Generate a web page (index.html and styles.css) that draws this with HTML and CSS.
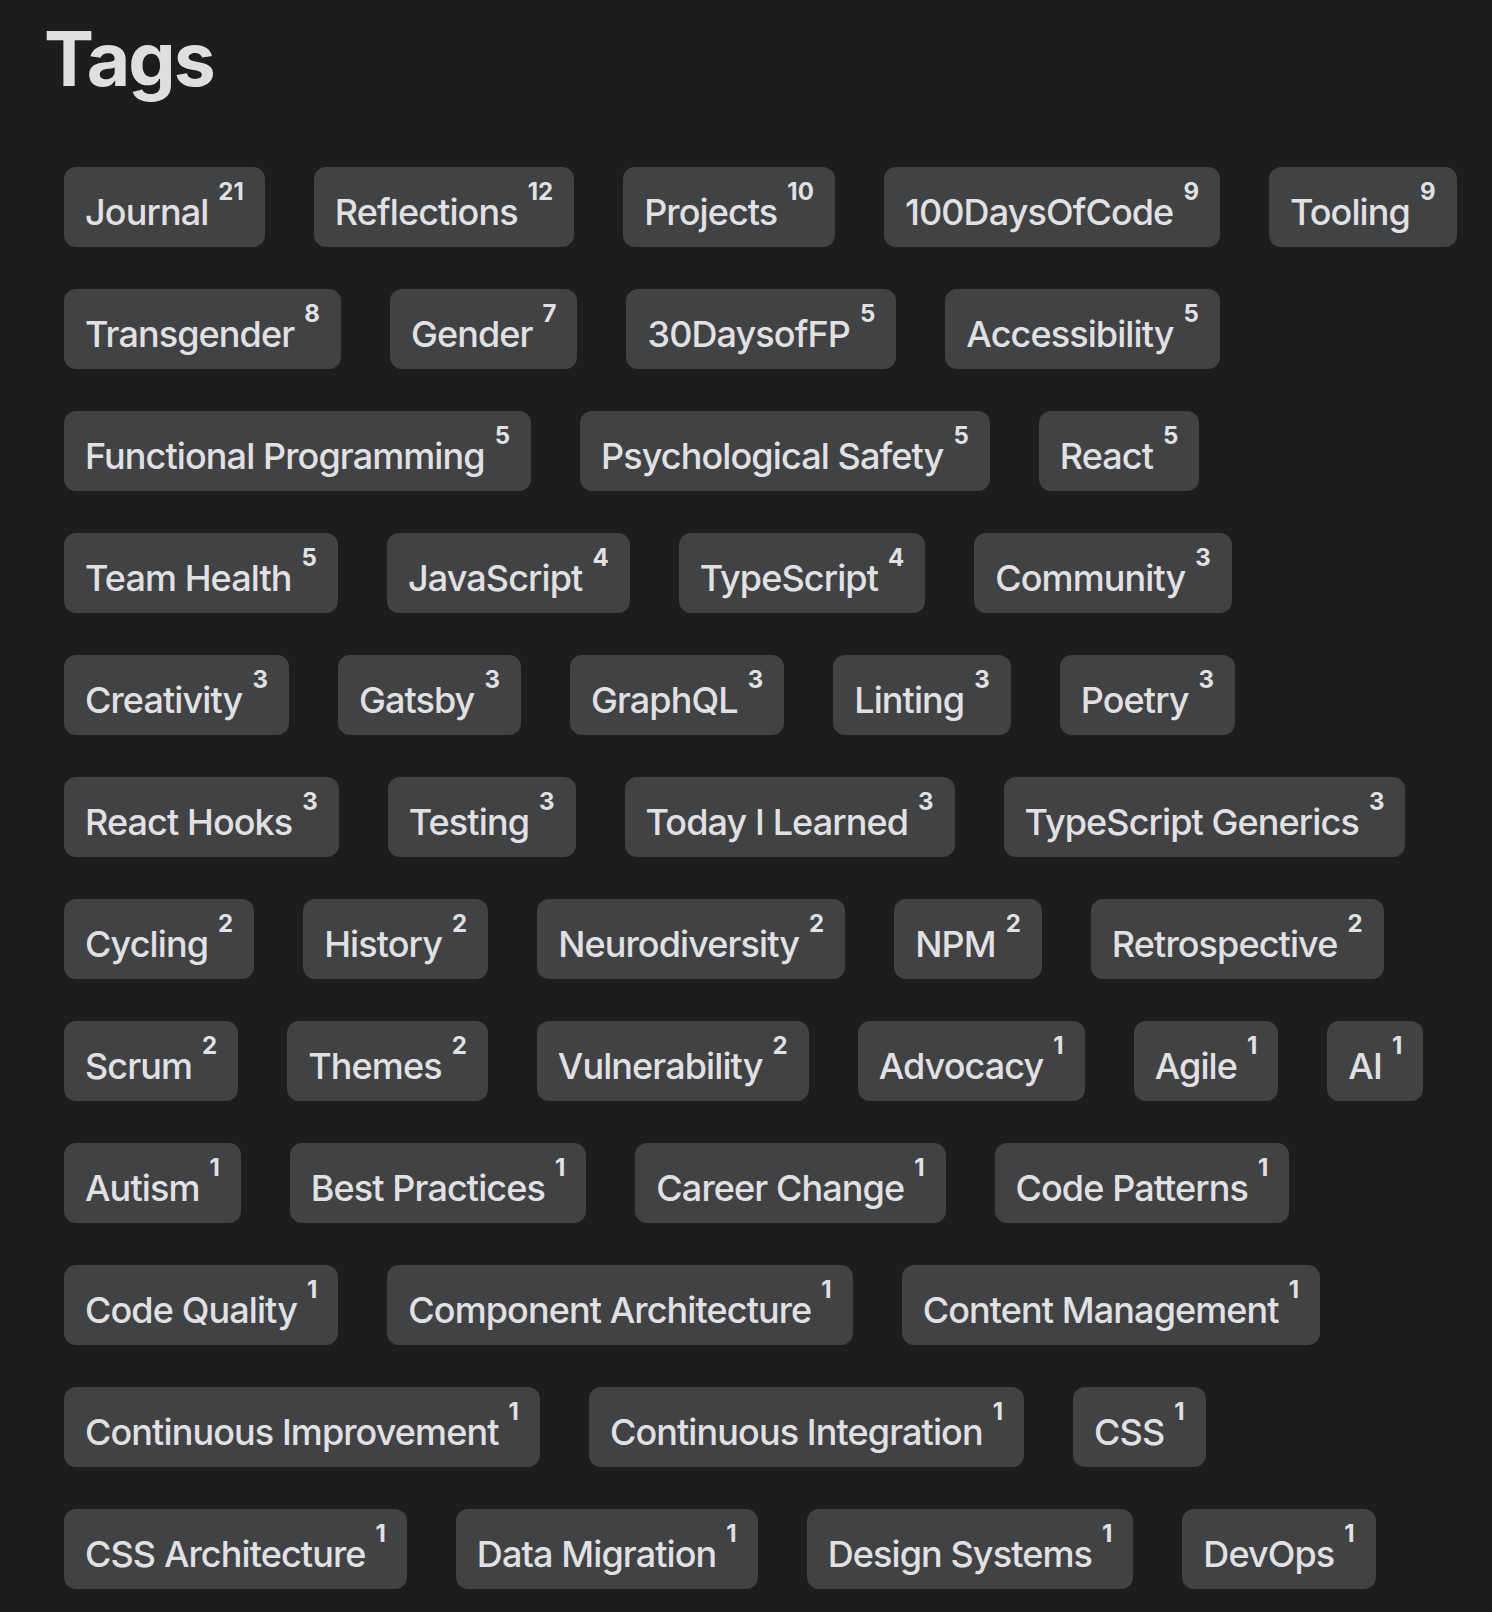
FILE: index.html
```html
<!DOCTYPE html>
<html lang="en">
<head>
<meta charset="utf-8">
<title>Tags</title>
<link rel="stylesheet" href="styles.css">
</head>
<body>
<main class="page">
  <h1 class="page-title">Tags</h1>
  <ul class="tag-list">
    <li class="tag"><span class="tag-name">Journal</span><span class="tag-count">21</span></li>
    <li class="tag"><span class="tag-name">Reflections</span><span class="tag-count">12</span></li>
    <li class="tag"><span class="tag-name">Projects</span><span class="tag-count">10</span></li>
    <li class="tag"><span class="tag-name">100DaysOfCode</span><span class="tag-count">9</span></li>
    <li class="tag"><span class="tag-name">Tooling</span><span class="tag-count">9</span></li>
    <li class="tag"><span class="tag-name">Transgender</span><span class="tag-count">8</span></li>
    <li class="tag"><span class="tag-name">Gender</span><span class="tag-count">7</span></li>
    <li class="tag"><span class="tag-name">30DaysofFP</span><span class="tag-count">5</span></li>
    <li class="tag"><span class="tag-name">Accessibility</span><span class="tag-count">5</span></li>
    <li class="tag"><span class="tag-name">Functional Programming</span><span class="tag-count">5</span></li>
    <li class="tag"><span class="tag-name">Psychological Safety</span><span class="tag-count">5</span></li>
    <li class="tag"><span class="tag-name">React</span><span class="tag-count">5</span></li>
    <li class="tag"><span class="tag-name">Team Health</span><span class="tag-count">5</span></li>
    <li class="tag"><span class="tag-name">JavaScript</span><span class="tag-count">4</span></li>
    <li class="tag"><span class="tag-name">TypeScript</span><span class="tag-count">4</span></li>
    <li class="tag"><span class="tag-name">Community</span><span class="tag-count">3</span></li>
    <li class="tag"><span class="tag-name">Creativity</span><span class="tag-count">3</span></li>
    <li class="tag"><span class="tag-name">Gatsby</span><span class="tag-count">3</span></li>
    <li class="tag"><span class="tag-name">GraphQL</span><span class="tag-count">3</span></li>
    <li class="tag"><span class="tag-name">Linting</span><span class="tag-count">3</span></li>
    <li class="tag"><span class="tag-name">Poetry</span><span class="tag-count">3</span></li>
    <li class="tag"><span class="tag-name">React Hooks</span><span class="tag-count">3</span></li>
    <li class="tag"><span class="tag-name">Testing</span><span class="tag-count">3</span></li>
    <li class="tag"><span class="tag-name">Today I Learned</span><span class="tag-count">3</span></li>
    <li class="tag"><span class="tag-name">TypeScript Generics</span><span class="tag-count">3</span></li>
    <li class="tag"><span class="tag-name">Cycling</span><span class="tag-count">2</span></li>
    <li class="tag"><span class="tag-name">History</span><span class="tag-count">2</span></li>
    <li class="tag"><span class="tag-name">Neurodiversity</span><span class="tag-count">2</span></li>
    <li class="tag"><span class="tag-name">NPM</span><span class="tag-count">2</span></li>
    <li class="tag"><span class="tag-name">Retrospective</span><span class="tag-count">2</span></li>
    <li class="tag"><span class="tag-name">Scrum</span><span class="tag-count">2</span></li>
    <li class="tag"><span class="tag-name">Themes</span><span class="tag-count">2</span></li>
    <li class="tag"><span class="tag-name">Vulnerability</span><span class="tag-count">2</span></li>
    <li class="tag"><span class="tag-name">Advocacy</span><span class="tag-count">1</span></li>
    <li class="tag"><span class="tag-name">Agile</span><span class="tag-count">1</span></li>
    <li class="tag"><span class="tag-name">AI</span><span class="tag-count">1</span></li>
    <li class="tag"><span class="tag-name">Autism</span><span class="tag-count">1</span></li>
    <li class="tag"><span class="tag-name">Best Practices</span><span class="tag-count">1</span></li>
    <li class="tag"><span class="tag-name">Career Change</span><span class="tag-count">1</span></li>
    <li class="tag"><span class="tag-name">Code Patterns</span><span class="tag-count">1</span></li>
    <li class="tag"><span class="tag-name">Code Quality</span><span class="tag-count">1</span></li>
    <li class="tag"><span class="tag-name">Component Architecture</span><span class="tag-count">1</span></li>
    <li class="tag"><span class="tag-name">Content Management</span><span class="tag-count">1</span></li>
    <li class="tag"><span class="tag-name">Continuous Improvement</span><span class="tag-count">1</span></li>
    <li class="tag"><span class="tag-name">Continuous Integration</span><span class="tag-count">1</span></li>
    <li class="tag"><span class="tag-name">CSS</span><span class="tag-count">1</span></li>
    <li class="tag"><span class="tag-name">CSS Architecture</span><span class="tag-count">1</span></li>
    <li class="tag"><span class="tag-name">Data Migration</span><span class="tag-count">1</span></li>
    <li class="tag"><span class="tag-name">Design Systems</span><span class="tag-count">1</span></li>
    <li class="tag"><span class="tag-name">DevOps</span><span class="tag-count">1</span></li>
  </ul>
</main>
</body>
</html>
```

FILE: styles.css
```css
html, body {
  margin: 0;
  padding: 0;
  background: #1c1d1f;
}

body {
  font-family: Inter, "Noto Sans", "Liberation Sans", sans-serif;
  color: #e1e1e4;
}

.page {
  padding: 21px 0 0 44px;
}

.page-title {
  margin: 0;
  font-size: 75px;
  line-height: 1;
  font-weight: 700;
  letter-spacing: -0.025em;
  color: #dfdfe2;
}

.tag-list {
  list-style: none;
  margin: 71px 0 0;
  padding: 0 0 0 20px;
  max-width: 1410px;
  display: flex;
  flex-wrap: wrap;
  column-gap: 49px;
  row-gap: 42px;
}

.tag {
  display: flex;
  align-items: flex-start;
  height: 80px;
  box-sizing: border-box;
  padding: 0 21px 0 21px;
  background: #414244;
  border-radius: 12px;
}

.tag-name {
  margin-top: 24px;
  font-size: 36px;
  line-height: 1.2;
  font-weight: 500;
  letter-spacing: -0.025em;
  white-space: nowrap;
}

.tag-count {
  margin: 13px 0 0 10px;
  font-size: 24px;
  line-height: 1;
  font-weight: 700;
}
```
